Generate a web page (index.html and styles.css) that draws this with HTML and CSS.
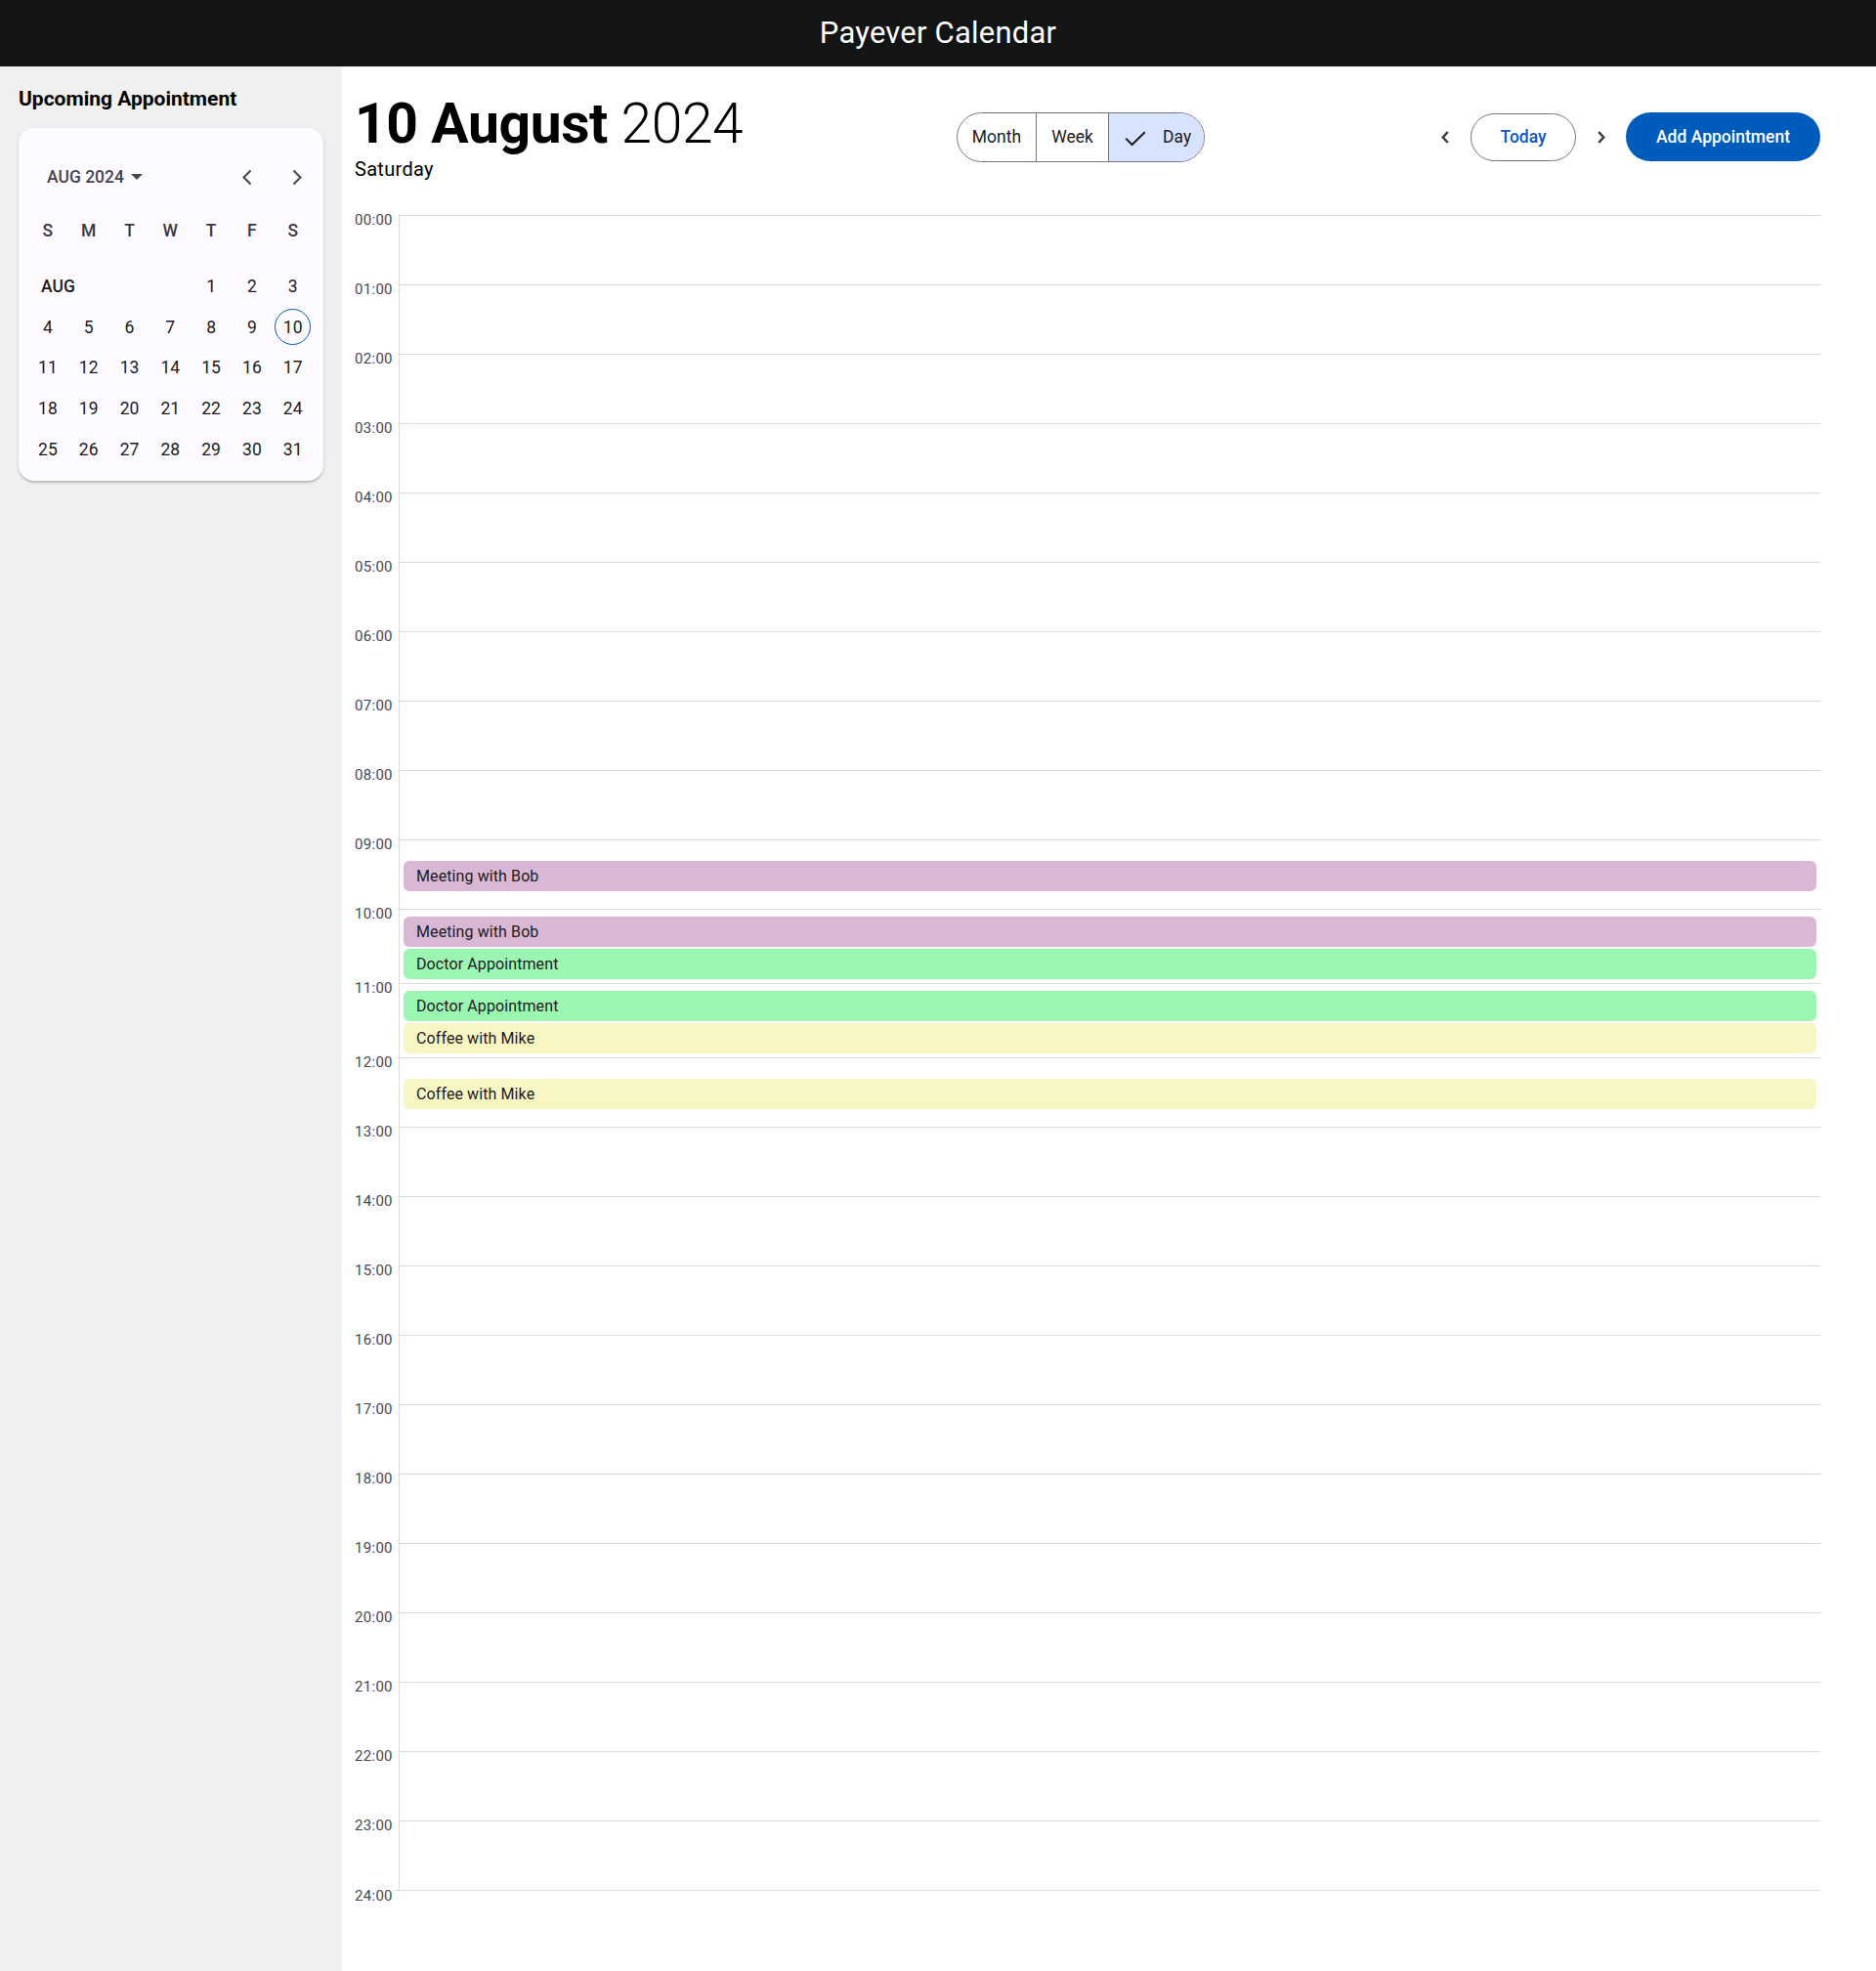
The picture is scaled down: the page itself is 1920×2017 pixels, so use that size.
FILE: index.html
```html
<!DOCTYPE html>
<html lang="en">
<head>
<meta charset="utf-8">
<title>Payever Calendar</title>
<link rel="stylesheet" href="styles.css">
</head>
<body>
<header class="topbar">Payever Calendar</header>
<div class="layout">
  <aside class="sidebar">
    <h2 class="side-title">Upcoming Appointment</h2>
    <div class="mini-cal">
      <div class="mc-head">
        <button class="mc-period">AUG 2024 <span class="mc-caret"></span></button>
        <div class="mc-arrows">
          <button class="mc-arrow"><svg width="12" height="17" viewBox="0 0 12 17"><path d="M9.5 1.5 L2.5 8.5 L9.5 15.5" fill="none" stroke="#49454f" stroke-width="2"/></svg></button>
          <button class="mc-arrow"><svg width="12" height="17" viewBox="0 0 12 17"><path d="M2.5 1.5 L9.5 8.5 L2.5 15.5" fill="none" stroke="#49454f" stroke-width="2"/></svg></button>
        </div>
      </div>
      <div class="mc-dow">
        <span>S</span><span>M</span><span>T</span><span>W</span><span>T</span><span>F</span><span>S</span>
      </div>
      <div class="mc-grid">
        <span class="mc-month">AUG</span>
        <span>1</span><span>2</span><span>3</span>
        <span>4</span><span>5</span><span>6</span><span>7</span><span>8</span><span>9</span><span class="mc-today">10</span>
        <span>11</span><span>12</span><span>13</span><span>14</span><span>15</span><span>16</span><span>17</span>
        <span>18</span><span>19</span><span>20</span><span>21</span><span>22</span><span>23</span><span>24</span>
        <span>25</span><span>26</span><span>27</span><span>28</span><span>29</span><span>30</span><span>31</span>
      </div>
    </div>
  </aside>
  <main class="main">
    <div class="main-head">
      <div class="date-block">
        <h1 class="date-title"><strong>10 August</strong> <span class="year">2024</span></h1>
        <div class="weekday">Saturday</div>
      </div>
      <div class="toggle">
        <button class="tg">Month</button>
        <button class="tg">Week</button>
        <button class="tg tg-on"><svg class="tg-check" width="22" height="16" viewBox="0 0 22 16"><path d="M1.2 7.6 L7.6 14 L20.8 1.2" fill="none" stroke="#1d1b20" stroke-width="2"/></svg>Day</button>
      </div>
      <div class="nav">
        <button class="nav-arrow"><svg width="10" height="15" viewBox="0 0 10 15"><path d="M7.8 2 L2.8 7.5 L7.8 13" fill="none" stroke="#3b3b3b" stroke-width="2.5"/></svg></button>
        <button class="btn-today">Today</button>
        <button class="nav-arrow"><svg width="10" height="15" viewBox="0 0 10 15"><path d="M2.2 2 L7.2 7.5 L2.2 13" fill="none" stroke="#3b3b3b" stroke-width="2.5"/></svg></button>
        <button class="btn-add">Add Appointment</button>
      </div>
    </div>

    <div class="grid">
      <div class="hour"><div class="hl">00:00</div><div class="cell"></div></div>
      <div class="hour"><div class="hl">01:00</div><div class="cell"></div></div>
      <div class="hour"><div class="hl">02:00</div><div class="cell"></div></div>
      <div class="hour"><div class="hl">03:00</div><div class="cell"></div></div>
      <div class="hour"><div class="hl">04:00</div><div class="cell"></div></div>
      <div class="hour"><div class="hl">05:00</div><div class="cell"></div></div>
      <div class="hour"><div class="hl">06:00</div><div class="cell"></div></div>
      <div class="hour"><div class="hl">07:00</div><div class="cell"></div></div>
      <div class="hour"><div class="hl">08:00</div><div class="cell"></div></div>
      <div class="hour"><div class="hl">09:00</div><div class="cell">
        <div class="ev ev-purple">Meeting with Bob</div>
      </div></div>
      <div class="hour"><div class="hl">10:00</div><div class="cell">
        <div class="ev ev-purple">Meeting with Bob</div>
        <div class="ev ev-green">Doctor Appointment</div>
      </div></div>
      <div class="hour"><div class="hl">11:00</div><div class="cell">
        <div class="ev ev-green">Doctor Appointment</div>
        <div class="ev ev-yellow">Coffee with Mike</div>
      </div></div>
      <div class="hour"><div class="hl">12:00</div><div class="cell">
        <div class="ev ev-yellow">Coffee with Mike</div>
      </div></div>
      <div class="hour"><div class="hl">13:00</div><div class="cell"></div></div>
      <div class="hour"><div class="hl">14:00</div><div class="cell"></div></div>
      <div class="hour"><div class="hl">15:00</div><div class="cell"></div></div>
      <div class="hour"><div class="hl">16:00</div><div class="cell"></div></div>
      <div class="hour"><div class="hl">17:00</div><div class="cell"></div></div>
      <div class="hour"><div class="hl">18:00</div><div class="cell"></div></div>
      <div class="hour"><div class="hl">19:00</div><div class="cell"></div></div>
      <div class="hour"><div class="hl">20:00</div><div class="cell"></div></div>
      <div class="hour"><div class="hl">21:00</div><div class="cell"></div></div>
      <div class="hour"><div class="hl">22:00</div><div class="cell"></div></div>
      <div class="hour"><div class="hl">23:00</div><div class="cell"></div></div>
      <div class="hour hour-end"><div class="hl">24:00</div><div class="cell cell-end"></div></div>
    </div>
  </main>
</div>
</body>
</html>
```

FILE: styles.css
```css
* { box-sizing: border-box; }
html, body { margin: 0; padding: 0; }
body {
  font-family: Roboto, "Liberation Sans", sans-serif;
  color: #1d1b20;
  background: #ffffff;
}
button {
  font-family: inherit;
  background: none;
  border: none;
  padding: 0;
  margin: 0;
  cursor: pointer;
  color: inherit;
}

.topbar {
  height: 68px;
  background: #131414;
  color: #ffffff;
  font-size: 31px;
  line-height: 68px;
  text-align: center;
  letter-spacing: 0.2px;
}

.layout {
  display: flex;
  min-height: calc(100vh - 68px);
}

/* Sidebar */
.sidebar {
  flex: 0 0 350px;
  background: #f0f0f0;
  padding: 22px 19px 20px;
}
.side-title {
  margin: 0;
  font-size: 21px;
  font-weight: 700;
  line-height: 23px;
  color: #000;
}
.mini-cal {
  margin-top: 18px;
  width: 312px;
  background: #fdfbff;
  border-radius: 16px;
  box-shadow: 0 2px 2px rgba(0,0,0,0.18), 0 1px 5px rgba(0,0,0,0.08);
  padding: 25px 10px 11px 9px;
}
.mc-head {
  height: 50px;
  display: flex;
  align-items: center;
  justify-content: space-between;
}
.mc-period {
  display: flex;
  align-items: center;
  font-size: 17.5px;
  font-weight: 500;
  color: #49454f;
  padding-left: 20px;
}
.mc-caret {
  display: inline-block;
  margin-left: 7px;
  width: 0; height: 0;
  border-left: 6px solid transparent;
  border-right: 6px solid transparent;
  border-top: 6px solid #49454f;
}
.mc-arrows {
  display: flex;
  gap: 39px;
  padding-right: 11px;
}
.mc-arrow { display: flex; width: 12px; height: 17px; }
.mc-dow {
  display: grid;
  grid-template-columns: repeat(7, 41.8px);
  height: 60px;
  align-items: center;
  margin-bottom: 6px;
  font-size: 17.5px;
  font-weight: 500;
  color: #3b3842;
}
.mc-dow span { text-align: center; }
.mc-grid {
  display: grid;
  grid-template-columns: repeat(7, 41.8px);
  grid-auto-rows: 41.8px;
  font-size: 17.5px;
  color: #1d1b20;
}
.mc-grid span {
  display: flex;
  align-items: center;
  justify-content: center;
}
.mc-grid .mc-month {
  grid-column: span 4;
  justify-content: flex-start;
  padding-left: 14px;
  font-weight: 500;
}
.mc-grid .mc-today {
  width: 37px;
  height: 37px;
  margin: auto;
  border: 1.3px solid #005cbb;
  border-radius: 50%;
}

/* Main */
.main {
  flex: 1;
  padding: 25px 57px 40px 13px;
}
.main-head {
  display: flex;
  align-items: center;
}
.date-block {
  flex: 0 0 616px;
}
.date-title {
  margin: 0;
  font-size: 57px;
  line-height: 68px;
  font-weight: 300;
  color: #000;
  letter-spacing: -0.4px;
}
.date-title strong { font-weight: 700; }
.weekday {
  font-size: 20px;
  line-height: 23px;
  margin-top: 1px;
  color: #000;
  letter-spacing: 0.3px;
}

.toggle {
  display: flex;
  height: 51px;
  margin-top: 2px;
  border: 1px solid #79747e;
  border-radius: 26px;
  overflow: hidden;
}
.tg {
  font-size: 17.5px;
  color: #1d1b20;
  display: flex;
  align-items: center;
  height: 100%;
}
.tg:nth-child(1) { width: 81px; justify-content: center; border-right: 1px solid #79747e; }
.tg:nth-child(2) { width: 74px; justify-content: center; border-right: 1px solid #79747e; }
.tg-on {
  width: 97px;
  background: #d7e3ff;
  padding-left: 16px;
}
.tg-check { margin-right: 17px; margin-top: 4px; }

.nav {
  margin-left: auto;
  margin-top: 2px;
  display: flex;
  align-items: center;
}
.nav-arrow {
  width: 24px;
  height: 40px;
  display: flex;
  align-items: center;
  justify-content: center;
}
.btn-today {
  margin: 0 14px;
  width: 108px;
  height: 49px;
  border: 1px solid #79747e;
  border-radius: 25px;
  color: #0b57c0;
  font-size: 17.5px;
  font-weight: 500;
}
.btn-add {
  margin-left: 13px;
  width: 199px;
  height: 50px;
  border-radius: 25px;
  background: #005cbb;
  color: #fff;
  font-size: 17.5px;
  font-weight: 500;
}

/* Day grid */
.grid {
  margin-top: 35px;
}
.hour {
  display: flex;
}
.hl {
  flex: 0 0 45px;
  font-size: 15px;
  line-height: 15px;
  margin-top: -2px;
  color: #4a4750;
  letter-spacing: 0.3px;
}
.cell {
  flex: 1;
  min-height: 71px;
  border-top: 1px solid #dcdcdc;
  border-left: 1px solid #dcdcdc;
  padding: 7px 4px 4px 4px;
  display: flex;
  flex-direction: column;
  justify-content: center;
  gap: 2px;
}
.cell-end {
  min-height: 0;
  height: 0;
  padding: 0;
  border-left: none;
  margin-left: -5px;
}
.hour-end .hl { margin-top: -1px; }
.ev {
  height: 31px;
  line-height: 31px;
  border-radius: 6px;
  padding-left: 13px;
  font-size: 16px;
  color: #1d1b20;
  letter-spacing: 0.1px;
}
.ev-purple { background: #d9b8d5; }
.ev-green { background: #9af6b0; }
.ev-yellow { background: #f8f7c3; }
```
